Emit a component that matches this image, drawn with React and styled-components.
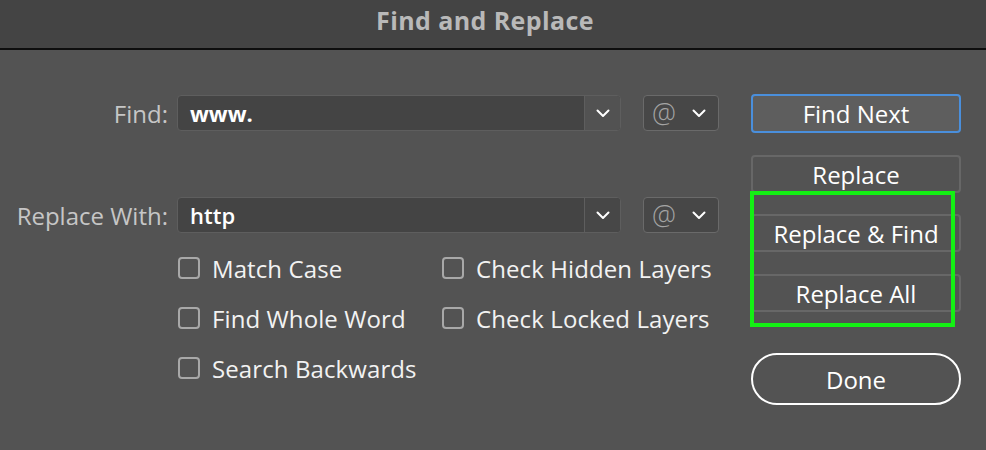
import React from "react";
import styled, { createGlobalStyle } from "styled-components";

const GlobalStyle = createGlobalStyle`
  html, body {
    margin: 0;
    padding: 0;
    background: #535353;
    font-family: "Open Sans", "Noto Sans", sans-serif;
  }
`;

const Dialog = styled.div`
  width: 986px;
  height: 450px;
  background: #535353;
  overflow: hidden;
`;

const TitleBar = styled.div`
  height: 50px;
  background: #444444;
  border-bottom: 2px solid #0e0e0e;
  display: flex;
  align-items: center;
  justify-content: center;
  color: #b9b9b9;
  font-family: "Open Sans", "Noto Sans", sans-serif;
  font-weight: 700;
  font-size: 25px;
  letter-spacing: 0.4px;
  padding: 0 16px 8px 0;
  box-sizing: border-box;
`;

const Body = styled.div`
  display: flex;
  align-items: flex-start;
`;

const LeftPanel = styled.div`
  display: flex;
  flex-direction: column;
  padding-top: 45px;
`;

const FieldRow = styled.div`
  display: flex;
  align-items: center;
  height: 36px;
  margin-bottom: ${(p) => p.$gap || 0}px;
`;

const Label = styled.div`
  width: 168px;
  padding-right: 9px;
  text-align: right;
  color: #c6c6c6;
  font-size: 24px;
  font-weight: 500;
  white-space: nowrap;
`;

const Combo = styled.div`
  width: 444px;
  height: 36px;
  box-sizing: border-box;
  display: flex;
  border: 1px solid #5e5e5e;
  border-radius: 4px;
  background: #444444;
  overflow: hidden;
`;

const TextInput = styled.div`
  flex: 1;
  display: flex;
  align-items: center;
  padding-left: 12px;
  color: #ffffff;
  font-size: 22px;
  font-weight: ${(p) => (p.$bold ? 700 : 600)};
`;

const DropButton = styled.div`
  width: 35px;
  border-left: 1px solid #5e5e5e;
  background: ${(p) => (p.$light ? "#525252" : "#474747")};
  display: flex;
  align-items: center;
  justify-content: center;
`;

const AtButton = styled.div`
  margin-left: 22px;
  width: 76px;
  height: 36px;
  box-sizing: border-box;
  border: 1px solid #6a6a6a;
  border-radius: 4px;
  background: #474747;
  display: flex;
  align-items: center;
  justify-content: space-between;
  padding: 0 12px 0 8px;
`;

const AtGlyph = styled.span`
  color: #a4a4a4;
  font-size: 27px;
  font-family: "Open Sans", sans-serif;
  font-weight: 300;
  line-height: 1;
  margin-top: -2px;
`;

const Options = styled.div`
  display: grid;
  grid-template-columns: 264px auto;
  grid-auto-rows: 50px;
  margin-left: 178px;
  margin-top: 10px;
`;

const Option = styled.label`
  display: flex;
  align-items: center;
  gap: 12px;
  color: #f2f2f2;
  font-size: 24px;
  font-weight: 500;
  letter-spacing: 0.1px;
  white-space: nowrap;
`;

const Box = styled.span`
  width: 22px;
  height: 22px;
  box-sizing: border-box;
  border: 2px solid #a8a8a8;
  border-radius: 4px;
  flex-shrink: 0;
`;

const RightPanel = styled.div`
  position: relative;
  margin-left: 32px;
  padding-top: 44px;
  display: flex;
  flex-direction: column;
  width: 210px;
`;

const Button = styled.div`
  height: ${(p) => (p.$tall ? 39 : 38)}px;
  box-sizing: border-box;
  margin-top: ${(p) => p.$mt || 0}px;
  border: 2px solid ${(p) => (p.$primary ? "#4a8fdc" : "#676767")};
  border-radius: 4px;
  background: ${(p) => (p.$primary ? "#5e5e5e" : "#535353")};
  color: #ffffff;
  font-size: 24px;
  font-weight: 500;
  display: flex;
  align-items: center;
  justify-content: center;
  white-space: nowrap;
`;

const DoneButton = styled.div`
  margin-top: 41px;
  height: 52px;
  box-sizing: border-box;
  border: 2px solid #ffffff;
  border-radius: 26px;
  color: #ffffff;
  font-size: 24px;
  font-weight: 500;
  display: flex;
  align-items: center;
  justify-content: center;
`;

const Highlight = styled.div`
  position: absolute;
  left: -1px;
  top: 141px;
  width: 205px;
  height: 136px;
  box-sizing: border-box;
  border: 4px solid #14f014;
  pointer-events: none;
`;

const Chevron = () => (
  <svg width="14" height="9" viewBox="0 0 14 9">
    <path d="M1.5 1.5 L7 7 L12.5 1.5" fill="none" stroke="#ffffff" strokeWidth="2" strokeLinecap="round" strokeLinejoin="round" />
  </svg>
);

const Check = ({ children }) => (
  <Option>
    <Box />
    {children}
  </Option>
);

export default function App() {
  return (
    <Dialog>
      <GlobalStyle />
      <TitleBar>Find and Replace</TitleBar>
      <Body>
        <LeftPanel>
          <FieldRow $gap={66}>
            <Label>Find:</Label>
            <Combo>
              <TextInput $bold>www.</TextInput>
              <DropButton $light>
                <Chevron />
              </DropButton>
            </Combo>
            <AtButton>
              <AtGlyph>@</AtGlyph>
              <Chevron />
            </AtButton>
          </FieldRow>
          <FieldRow>
            <Label>Replace With:</Label>
            <Combo>
              <TextInput>http</TextInput>
              <DropButton>
                <Chevron />
              </DropButton>
            </Combo>
            <AtButton>
              <AtGlyph>@</AtGlyph>
              <Chevron />
            </AtButton>
          </FieldRow>
          <Options>
            <Check>Match Case</Check>
            <Check>Check Hidden Layers</Check>
            <Check>Find Whole Word</Check>
            <Check>Check Locked Layers</Check>
            <Check>Search Backwards</Check>
          </Options>
        </LeftPanel>
        <RightPanel>
          <Button $primary $tall>Find Next</Button>
          <Button $mt={22}>Replace</Button>
          <Button $mt={21}>Replace &amp; Find</Button>
          <Button $mt={22}>Replace All</Button>
          <DoneButton>Done</DoneButton>
          <Highlight />
        </RightPanel>
      </Body>
    </Dialog>
  );
}
